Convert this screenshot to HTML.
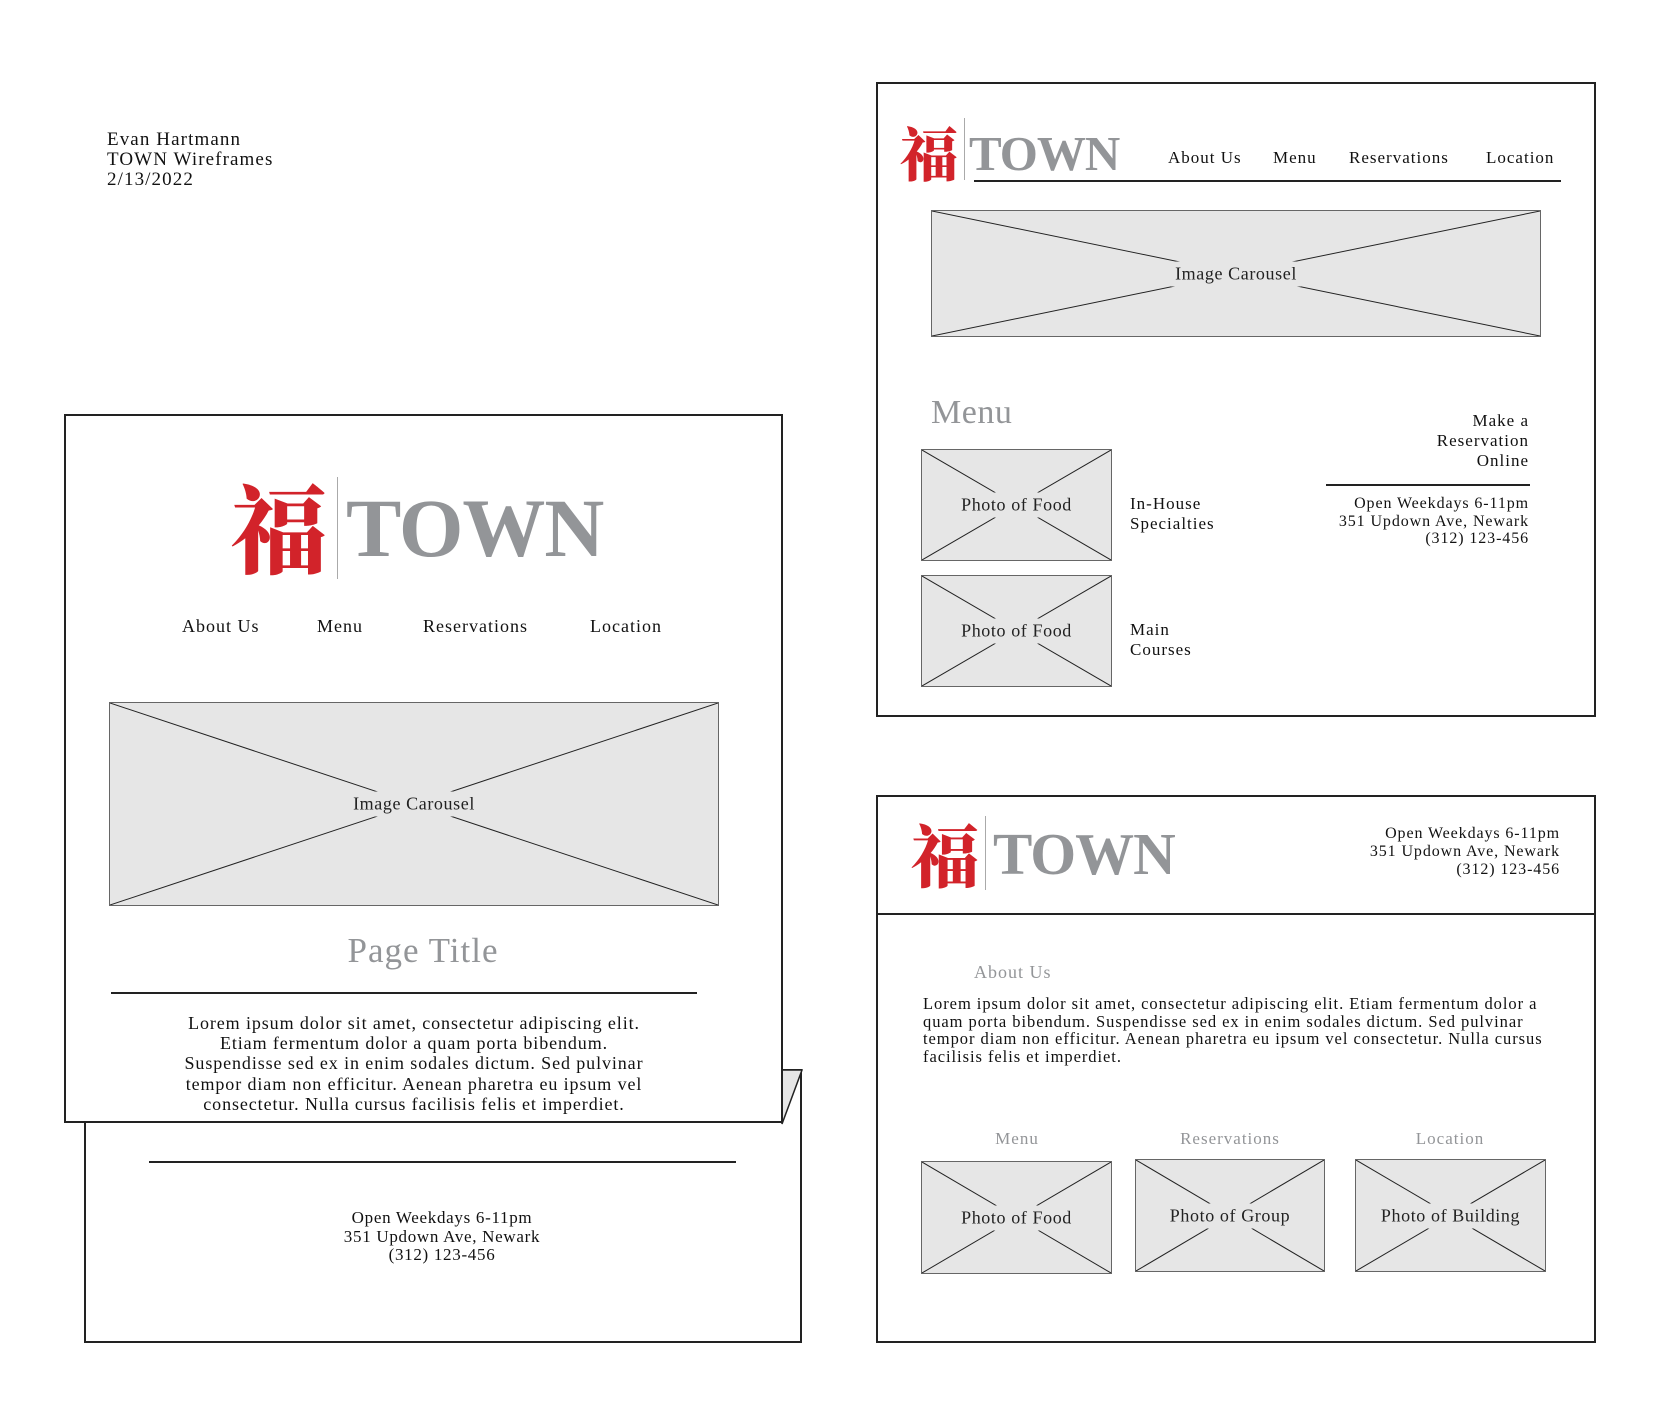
<!DOCTYPE html>
<html><head><meta charset="utf-8">
<style>
*{margin:0;padding:0;box-sizing:border-box}
body{width:1680px;height:1413px;background:#fff;position:relative;overflow:hidden;font-family:"Liberation Serif","Noto Serif CJK SC",serif;color:#111}
.a{position:absolute;white-space:nowrap;letter-spacing:0.7px}
.frame{position:absolute;border:2px solid #222;background:#fff}
.ph{position:absolute;background:#e6e6e6;border:1.5px solid #666}
.ph svg{position:absolute;left:0;top:0;width:100%;height:100%}
.ph span{position:absolute;left:50%;top:50%;transform:translate(-50%,-50%);background:#e6e6e6;padding:2px 4px;white-space:nowrap;font-size:18px;color:#222;letter-spacing:0.6px}
.fu{position:absolute;color:#d2232a;font-family:"Noto Serif CJK SC","Noto Sans CJK SC",serif;font-weight:900;line-height:1}
.vl{position:absolute;width:1px;background:#aaa}
.town{position:absolute;color:#939598;font-weight:bold;line-height:1;letter-spacing:-1px}
.gray{color:#939598}
.hl{position:absolute;height:1.5px;background:#222}
</style></head><body>

<div class="a" style="left:107px;top:130px;font-size:19px;line-height:20px;letter-spacing:1.1px">Evan Hartmann<br>TOWN Wireframes<br>2/13/2022</div>

<!-- left back page -->
<div class="frame" style="left:84px;top:1069px;width:718px;height:274px"></div>
<svg class="a" style="left:780px;top:1068px" width="24" height="58"><polygon points="2,56 22,2 2,2" fill="#e6e6e6" stroke="#222" stroke-width="1.5"/></svg>
<div class="hl" style="left:149px;top:1161px;width:587px"></div>
<div class="a" style="left:292px;width:300px;top:1209px;font-size:17px;line-height:18.5px;text-align:center">Open Weekdays 6-11pm<br>351 Updown Ave, Newark<br>(312) 123-456</div>

<!-- left front page -->
<div class="frame" style="left:64px;top:414px;width:719px;height:709px"></div>
<div class="fu" style="left:231px;top:478px;font-size:96px">福</div>
<div class="vl" style="left:337px;top:477px;height:102px"></div>
<div class="town" style="left:346px;top:487px;font-size:83px">TOWN</div>
<div class="a" style="left:182px;top:616px;font-size:18px;letter-spacing:1px">About Us</div>
<div class="a" style="left:317px;top:616px;font-size:18px;letter-spacing:1px">Menu</div>
<div class="a" style="left:423px;top:616px;font-size:18px;letter-spacing:1px">Reservations</div>
<div class="a" style="left:590px;top:616px;font-size:18px;letter-spacing:1px">Location</div>
<div class="ph" style="left:109px;top:702px;width:610px;height:204px"><svg viewBox="0 0 610 204" preserveAspectRatio="none"><line x1="0" y1="0" x2="610" y2="204" stroke="#222"/><line x1="610" y1="0" x2="0" y2="204" stroke="#222"/></svg><span>Image Carousel</span></div>
<div class="a gray" style="left:223px;width:400px;text-align:center;top:931px;font-size:35px;letter-spacing:1px">Page Title</div>
<div class="hl" style="left:111px;top:992px;width:586px"></div>
<div class="a" style="left:64px;width:700px;top:1013px;font-size:18px;line-height:20.2px;text-align:center;letter-spacing:0.9px">Lorem ipsum dolor sit amet, consectetur adipiscing elit.<br>Etiam fermentum dolor a quam porta bibendum.<br>Suspendisse sed ex in enim sodales dictum. Sed pulvinar<br>tempor diam non efficitur. Aenean pharetra eu ipsum vel<br>consectetur. Nulla cursus facilisis felis et imperdiet.</div>

<!-- right top page -->
<div class="frame" style="left:876px;top:82px;width:720px;height:635px"></div>
<div class="fu" style="left:900px;top:122px;font-size:58px">福</div>
<div class="vl" style="left:964px;top:118px;height:62px"></div>
<div class="town" style="left:969px;top:129px;font-size:49px">TOWN</div>
<div class="a" style="left:1168px;top:148px;font-size:17px;letter-spacing:1px">About Us</div>
<div class="a" style="left:1273px;top:148px;font-size:17px;letter-spacing:1px">Menu</div>
<div class="a" style="left:1349px;top:148px;font-size:17px;letter-spacing:1px">Reservations</div>
<div class="a" style="left:1486px;top:148px;font-size:17px;letter-spacing:1px">Location</div>
<div class="hl" style="left:974px;top:180px;width:587px"></div>
<div class="ph" style="left:931px;top:210px;width:610px;height:127px"><svg viewBox="0 0 610 127" preserveAspectRatio="none"><line x1="0" y1="0" x2="610" y2="127" stroke="#222"/><line x1="610" y1="0" x2="0" y2="127" stroke="#222"/></svg><span>Image Carousel</span></div>
<div class="a gray" style="left:931px;top:394px;font-size:34px;letter-spacing:0.5px">Menu</div>
<div class="ph" style="left:921px;top:449px;width:191px;height:112px"><svg viewBox="0 0 191 112" preserveAspectRatio="none"><line x1="0" y1="0" x2="191" y2="112" stroke="#222"/><line x1="191" y1="0" x2="0" y2="112" stroke="#222"/></svg><span>Photo of Food</span></div>
<div class="ph" style="left:921px;top:575px;width:191px;height:112px"><svg viewBox="0 0 191 112" preserveAspectRatio="none"><line x1="0" y1="0" x2="191" y2="112" stroke="#222"/><line x1="191" y1="0" x2="0" y2="112" stroke="#222"/></svg><span>Photo of Food</span></div>
<div class="a" style="left:1130px;top:494px;font-size:17px;line-height:20px;letter-spacing:1px">In-House<br>Specialties</div>
<div class="a" style="left:1130px;top:620px;font-size:17px;line-height:20px;letter-spacing:1px">Main<br>Courses</div>
<div class="a" style="left:1300px;width:229px;top:411px;font-size:17px;line-height:20px;text-align:right;letter-spacing:1px">Make a<br>Reservation<br>Online</div>
<div class="hl" style="left:1326px;top:484px;width:204px"></div>
<div class="a" style="left:1260px;width:269px;top:495px;font-size:16px;line-height:17.5px;text-align:right;letter-spacing:0.9px">Open Weekdays 6-11pm<br>351 Updown Ave, Newark<br>(312) 123-456</div>

<!-- right bottom page -->
<div class="frame" style="left:876px;top:795px;width:720px;height:548px"></div>
<div class="hl" style="left:876px;top:913px;width:720px"></div>
<div class="fu" style="left:911px;top:820px;font-size:68px">福</div>
<div class="vl" style="left:985px;top:816px;height:74px"></div>
<div class="town" style="left:993px;top:825px;font-size:59px">TOWN</div>
<div class="a" style="left:1260px;width:300px;top:825px;font-size:16px;line-height:18px;text-align:right;letter-spacing:0.9px">Open Weekdays 6-11pm<br>351 Updown Ave, Newark<br>(312) 123-456</div>
<div class="a gray" style="left:974px;top:962px;font-size:18px;letter-spacing:1px">About Us</div>
<div class="a" style="left:923px;top:995px;font-size:16.5px;line-height:17.6px;letter-spacing:0.95px">Lorem ipsum dolor sit amet, consectetur adipiscing elit. Etiam fermentum dolor a<br>quam porta bibendum. Suspendisse sed ex in enim sodales dictum. Sed pulvinar<br>tempor diam non efficitur. Aenean pharetra eu ipsum vel consectetur. Nulla cursus<br>facilisis felis et imperdiet.</div>
<div class="a gray" style="left:917px;width:200px;text-align:center;top:1129px;font-size:17px;letter-spacing:1px">Menu</div>
<div class="a gray" style="left:1130px;width:200px;text-align:center;top:1129px;font-size:17px;letter-spacing:1px">Reservations</div>
<div class="a gray" style="left:1350px;width:200px;text-align:center;top:1129px;font-size:17px;letter-spacing:1px">Location</div>
<div class="ph" style="left:921px;top:1161px;width:191px;height:113px"><svg viewBox="0 0 191 113" preserveAspectRatio="none"><line x1="0" y1="0" x2="191" y2="113" stroke="#222"/><line x1="191" y1="0" x2="0" y2="113" stroke="#222"/></svg><span>Photo of Food</span></div>
<div class="ph" style="left:1135px;top:1159px;width:190px;height:113px"><svg viewBox="0 0 190 113" preserveAspectRatio="none"><line x1="0" y1="0" x2="190" y2="113" stroke="#222"/><line x1="190" y1="0" x2="0" y2="113" stroke="#222"/></svg><span>Photo of Group</span></div>
<div class="ph" style="left:1355px;top:1159px;width:191px;height:113px"><svg viewBox="0 0 191 113" preserveAspectRatio="none"><line x1="0" y1="0" x2="191" y2="113" stroke="#222"/><line x1="191" y1="0" x2="0" y2="113" stroke="#222"/></svg><span>Photo of Building</span></div>

</body></html>
